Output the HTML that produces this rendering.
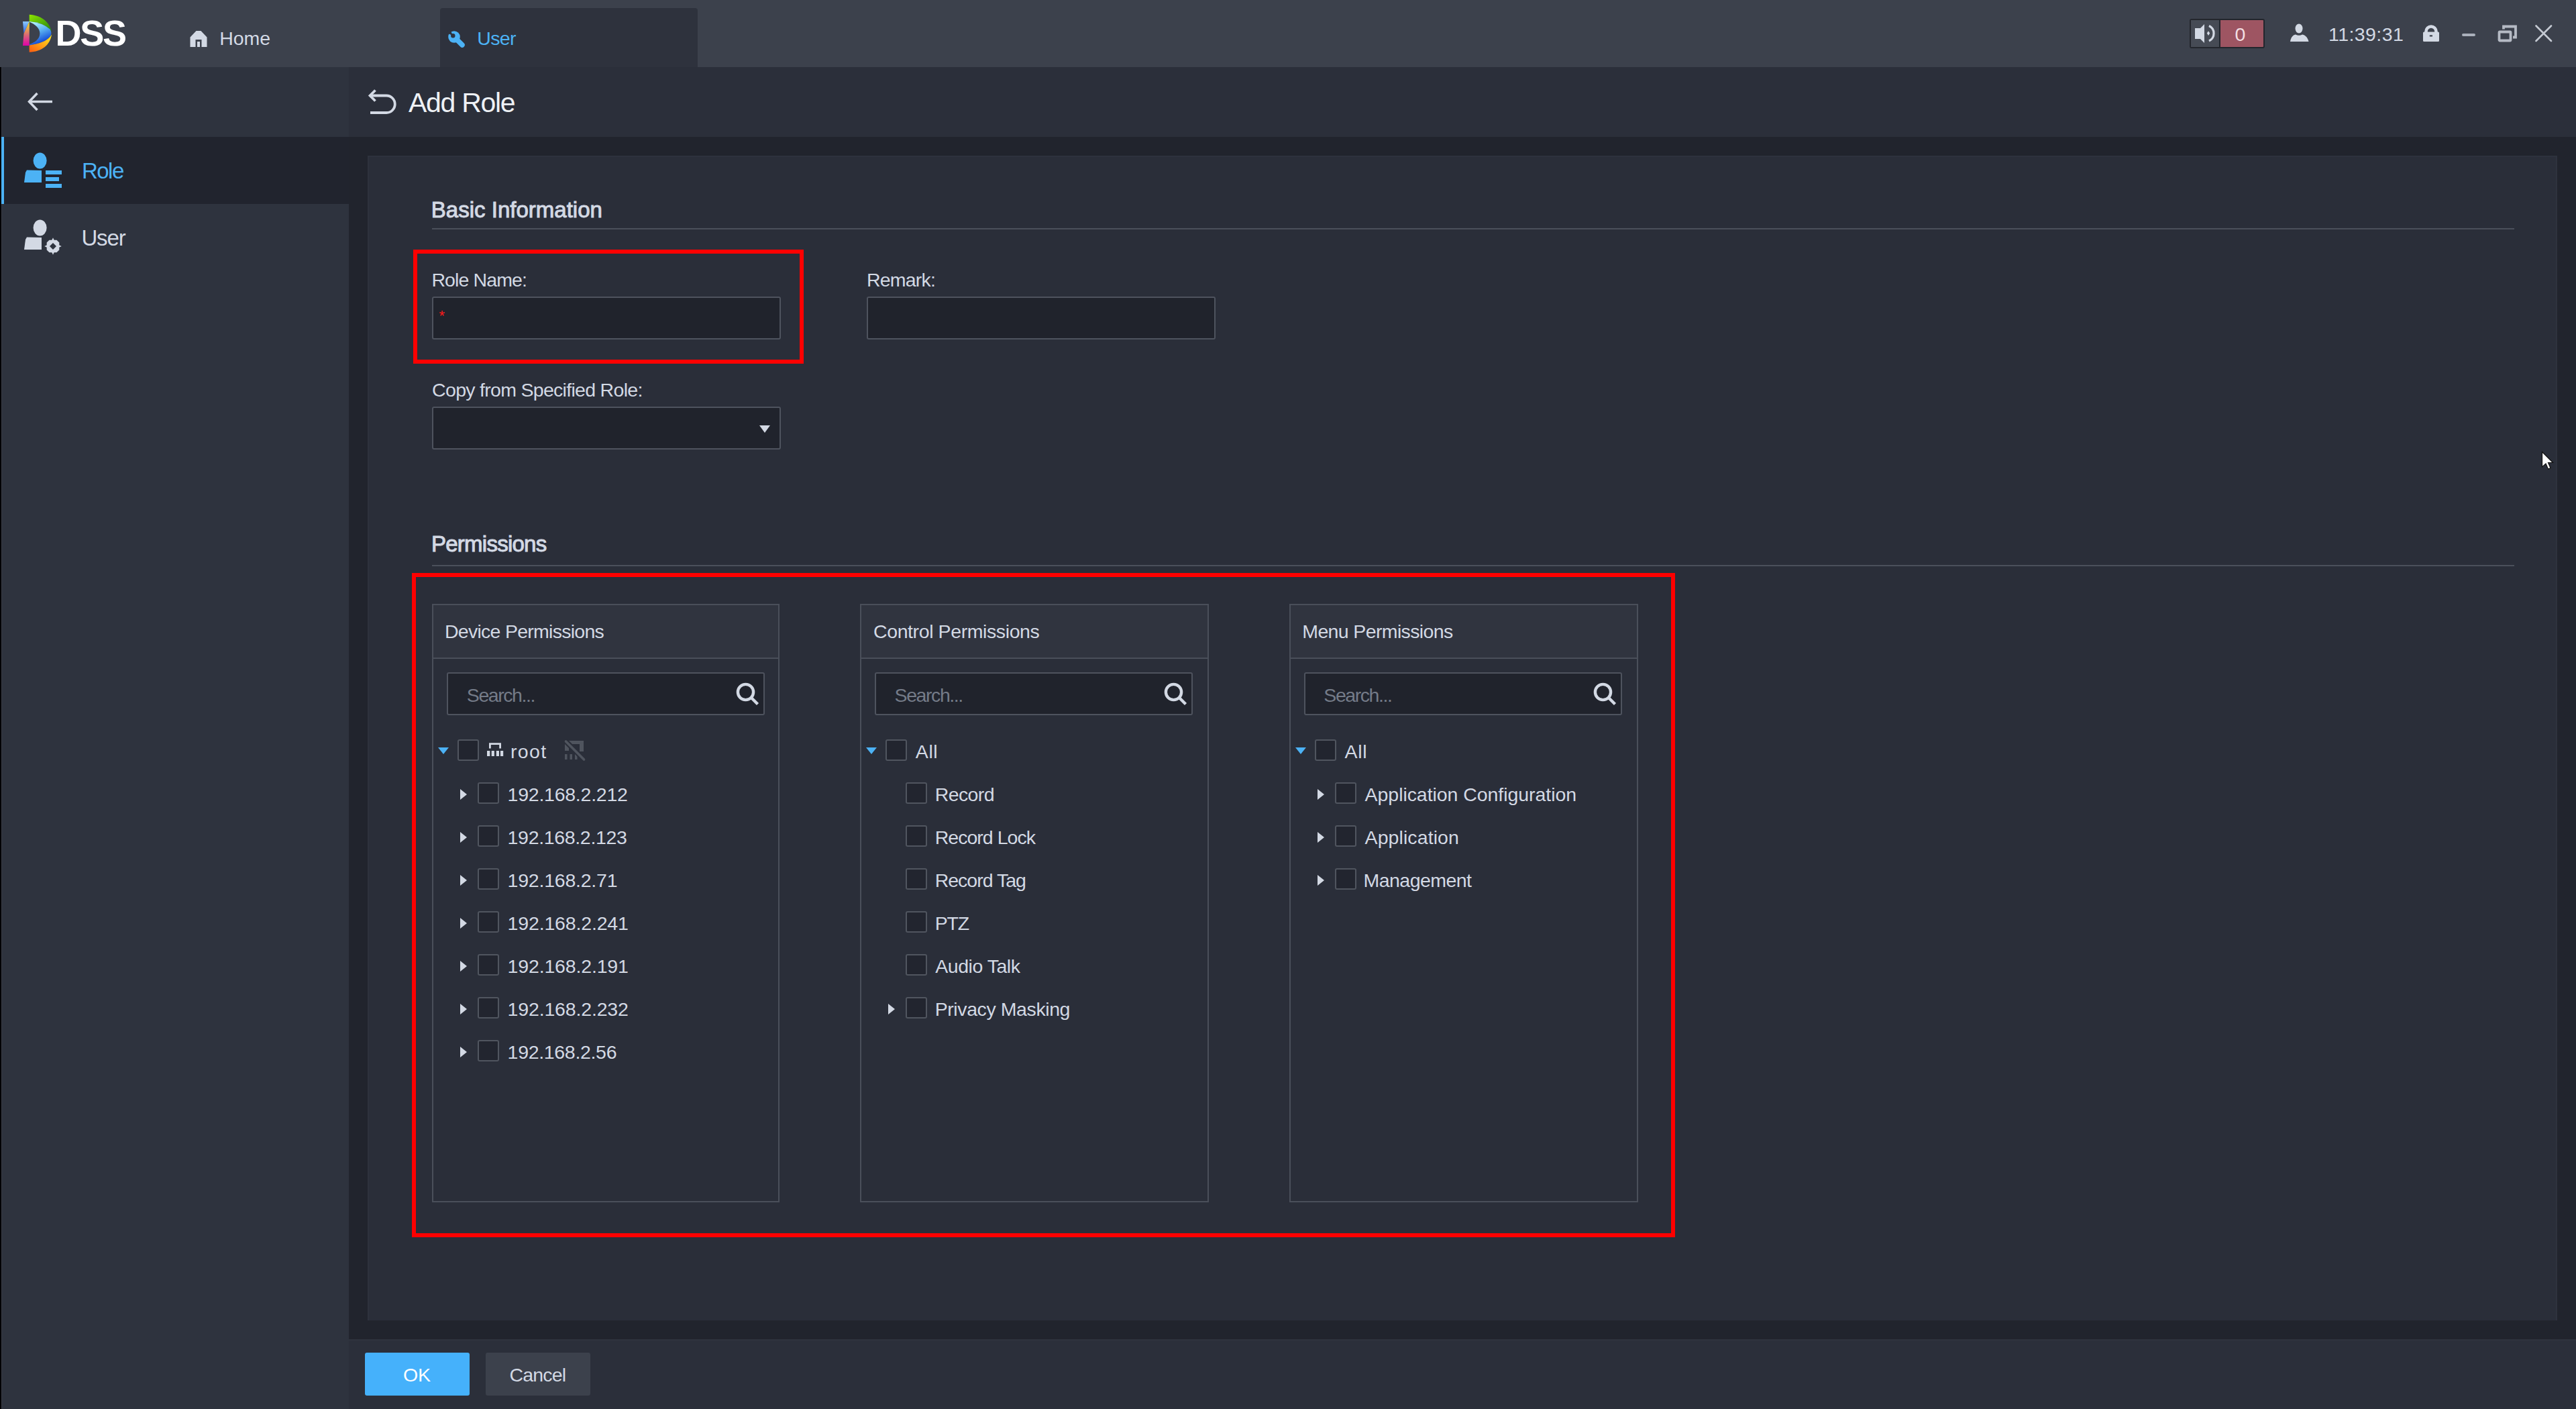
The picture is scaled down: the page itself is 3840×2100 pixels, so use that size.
<!DOCTYPE html>
<html><head><meta charset="utf-8"><style>
html,body{margin:0;padding:0;width:3840px;height:2100px;overflow:hidden;background:#21242d;}
body{position:relative;font-family:"Liberation Sans", sans-serif;}
.t{position:absolute;white-space:pre;line-height:1;font-family:"Liberation Sans", sans-serif;}
svg{display:block}
</style></head><body>
<div style="position:absolute;left:0px;top:0px;width:3840px;height:100px;background:#3c414c"></div>
<div style="position:absolute;left:656px;top:12px;width:384px;height:88px;background:#2e323d;border-radius:4px 4px 0 0"></div>
<div style="position:absolute;left:0px;top:100px;width:2px;height:2000px;background:#020205"></div>
<div style="position:absolute;left:2px;top:100px;width:518px;height:2000px;background:#2e333e"></div>
<div style="position:absolute;left:2px;top:100px;width:1px;height:2000px;background:#393c45"></div>
<div style="position:absolute;left:2px;top:204px;width:518px;height:100px;background:#21242e"></div>
<div style="position:absolute;left:2px;top:204px;width:4px;height:100px;background:#4cb2f5"></div>
<div style="position:absolute;left:520px;top:100px;width:3320px;height:2000px;background:#21242d"></div>
<div style="position:absolute;left:520px;top:100px;width:3320px;height:104px;background:#2b2f3a"></div>
<div style="position:absolute;left:548px;top:232px;width:3264px;height:1736px;background:#2a2e39;box-sizing:border-box;border:2px solid #2e323d;border-bottom:none"></div>
<div style="position:absolute;left:520px;top:1996px;width:3320px;height:104px;background:#2b2f3a"></div>
<div style="position:absolute;left:520px;top:1996px;width:3320px;height:2px;background:#2f333e"></div>
<div style="position:absolute;left:644px;top:340px;width:3104px;height:2px;background:#4b505b"></div>
<div style="position:absolute;left:644px;top:842px;width:3104px;height:2px;background:#4b505b"></div>
<div style="position:absolute;left:644px;top:442px;width:520px;height:64px;background:#20232c;box-sizing:border-box;border:2px solid #4e535e;border-radius:3px"></div>
<div style="position:absolute;left:1292px;top:442px;width:520px;height:64px;background:#20232c;box-sizing:border-box;border:2px solid #4e535e;border-radius:3px"></div>
<div style="position:absolute;left:644px;top:606px;width:520px;height:64px;background:#20232c;box-sizing:border-box;border:2px solid #4e535e;border-radius:3px"></div>
<svg style="position:absolute;left:1130px;top:633px" width="20" height="14"><path d="M2 1 L18 1 L10 12 Z" fill="#d3d9e4"/></svg>
<div class="t" style="left:654.50px;top:460.38px;font-size:22px;letter-spacing:0.000px;color:#ff1a1a;font-weight:400;">*</div>
<div style="position:absolute;left:616px;top:372px;width:582px;height:170px;box-sizing:border-box;border:6px solid #ff0000"></div>
<div style="position:absolute;left:614px;top:854px;width:1883px;height:990px;box-sizing:border-box;border:6px solid #ff0000"></div>
<div style="position:absolute;left:644px;top:900px;width:518px;height:892px;box-sizing:border-box;border:2px solid #4a4f5a;background:#2a2e39"></div>
<div style="position:absolute;left:646px;top:902px;width:514px;height:78px;background:#30343f"></div>
<div style="position:absolute;left:646px;top:980px;width:514px;height:2px;background:#4a4f5a"></div>
<div style="position:absolute;left:666px;top:1002px;width:474px;height:64px;background:#20232c;box-sizing:border-box;border:2px solid #4e535e;border-radius:3px"></div>
<svg style="position:absolute;left:1097px;top:1017px" width="36" height="36" viewBox="0 0 36 36"><circle cx="14.5" cy="14.5" r="11.6" fill="none" stroke="#d3d9e4" stroke-width="4.4"/><line x1="23" y1="23" x2="32.5" y2="32.5" stroke="#d3d9e4" stroke-width="4.4" stroke-linecap="butt"/></svg>
<div style="position:absolute;left:1282px;top:900px;width:520px;height:892px;box-sizing:border-box;border:2px solid #4a4f5a;background:#2a2e39"></div>
<div style="position:absolute;left:1284px;top:902px;width:516px;height:78px;background:#30343f"></div>
<div style="position:absolute;left:1284px;top:980px;width:516px;height:2px;background:#4a4f5a"></div>
<div style="position:absolute;left:1304px;top:1002px;width:474px;height:64px;background:#20232c;box-sizing:border-box;border:2px solid #4e535e;border-radius:3px"></div>
<svg style="position:absolute;left:1735px;top:1017px" width="36" height="36" viewBox="0 0 36 36"><circle cx="14.5" cy="14.5" r="11.6" fill="none" stroke="#d3d9e4" stroke-width="4.4"/><line x1="23" y1="23" x2="32.5" y2="32.5" stroke="#d3d9e4" stroke-width="4.4" stroke-linecap="butt"/></svg>
<div style="position:absolute;left:1922px;top:900px;width:520px;height:892px;box-sizing:border-box;border:2px solid #4a4f5a;background:#2a2e39"></div>
<div style="position:absolute;left:1924px;top:902px;width:516px;height:78px;background:#30343f"></div>
<div style="position:absolute;left:1924px;top:980px;width:516px;height:2px;background:#4a4f5a"></div>
<div style="position:absolute;left:1944px;top:1002px;width:474px;height:64px;background:#20232c;box-sizing:border-box;border:2px solid #4e535e;border-radius:3px"></div>
<svg style="position:absolute;left:2375px;top:1017px" width="36" height="36" viewBox="0 0 36 36"><circle cx="14.5" cy="14.5" r="11.6" fill="none" stroke="#d3d9e4" stroke-width="4.4"/><line x1="23" y1="23" x2="32.5" y2="32.5" stroke="#d3d9e4" stroke-width="4.4" stroke-linecap="butt"/></svg>
<svg style="position:absolute;left:653px;top:1114px" width="16" height="10"><path d="M0 0 L16 0 L8 10 Z" fill="#4cb2f5"/></svg>
<div style="position:absolute;left:682px;top:1102px;width:32px;height:32px;box-sizing:border-box;border:2px solid #50555f;background:#22252f;border-radius:3px"></div>
<svg style="position:absolute;left:720px;top:1098px" width="40" height="40" viewBox="720 1098 40 40"><path d="M730.4 1115.5 V1108.7 H745.6 V1115.5" fill="none" stroke="#d3d9e4" stroke-width="2.8"/><g fill="#d3d9e4"><rect x="726" y="1119" width="4.3" height="8"/><rect x="732.7" y="1119" width="4.2" height="8"/><rect x="739.8" y="1119" width="4.2" height="8"/><rect x="746" y="1119" width="4.2" height="8"/></g></svg>
<svg style="position:absolute;left:838px;top:1100px" width="40" height="38" viewBox="838 1100 40 38"><g fill="#4f545e"><rect x="842" y="1104" width="28" height="5"/><rect x="842" y="1104" width="6" height="15"/><rect x="864" y="1104" width="6" height="16"/><rect x="842" y="1124" width="3.5" height="8"/><rect x="849.5" y="1124" width="3.5" height="8"/><rect x="857" y="1124" width="3.5" height="8"/></g><line x1="843.5" y1="1105" x2="870.5" y2="1132" stroke="#2a2e39" stroke-width="8"/><line x1="843.5" y1="1105" x2="870.5" y2="1132" stroke="#4f545e" stroke-width="3.7" stroke-linecap="round"/></svg>
<div class="t" style="left:761.00px;top:1105.57px;font-size:28.5px;letter-spacing:1.333px;color:#d3d9e4;font-weight:400;">root</div>
<svg style="position:absolute;left:686px;top:1176px" width="10" height="16"><path d="M0 0 L10 8 L0 16 Z" fill="#d3d9e4"/></svg>
<div style="position:absolute;left:712px;top:1166px;width:32px;height:32px;box-sizing:border-box;border:2px solid #50555f;background:#22252f;border-radius:3px"></div>
<div class="t" style="left:756.60px;top:1169.57px;font-size:28.5px;letter-spacing:-0.250px;color:#d3d9e4;font-weight:400;">192.168.2.212</div>
<svg style="position:absolute;left:686px;top:1240px" width="10" height="16"><path d="M0 0 L10 8 L0 16 Z" fill="#d3d9e4"/></svg>
<div style="position:absolute;left:712px;top:1230px;width:32px;height:32px;box-sizing:border-box;border:2px solid #50555f;background:#22252f;border-radius:3px"></div>
<div class="t" style="left:756.60px;top:1233.57px;font-size:28.5px;letter-spacing:-0.333px;color:#d3d9e4;font-weight:400;">192.168.2.123</div>
<svg style="position:absolute;left:686px;top:1304px" width="10" height="16"><path d="M0 0 L10 8 L0 16 Z" fill="#d3d9e4"/></svg>
<div style="position:absolute;left:712px;top:1294px;width:32px;height:32px;box-sizing:border-box;border:2px solid #50555f;background:#22252f;border-radius:3px"></div>
<div class="t" style="left:756.60px;top:1297.57px;font-size:28.5px;letter-spacing:-0.227px;color:#d3d9e4;font-weight:400;">192.168.2.71</div>
<svg style="position:absolute;left:686px;top:1368px" width="10" height="16"><path d="M0 0 L10 8 L0 16 Z" fill="#d3d9e4"/></svg>
<div style="position:absolute;left:712px;top:1358px;width:32px;height:32px;box-sizing:border-box;border:2px solid #50555f;background:#22252f;border-radius:3px"></div>
<div class="t" style="left:756.60px;top:1361.57px;font-size:28.5px;letter-spacing:-0.167px;color:#d3d9e4;font-weight:400;">192.168.2.241</div>
<svg style="position:absolute;left:686px;top:1432px" width="10" height="16"><path d="M0 0 L10 8 L0 16 Z" fill="#d3d9e4"/></svg>
<div style="position:absolute;left:712px;top:1422px;width:32px;height:32px;box-sizing:border-box;border:2px solid #50555f;background:#22252f;border-radius:3px"></div>
<div class="t" style="left:756.60px;top:1425.57px;font-size:28.5px;letter-spacing:-0.167px;color:#d3d9e4;font-weight:400;">192.168.2.191</div>
<svg style="position:absolute;left:686px;top:1496px" width="10" height="16"><path d="M0 0 L10 8 L0 16 Z" fill="#d3d9e4"/></svg>
<div style="position:absolute;left:712px;top:1486px;width:32px;height:32px;box-sizing:border-box;border:2px solid #50555f;background:#22252f;border-radius:3px"></div>
<div class="t" style="left:756.60px;top:1489.57px;font-size:28.5px;letter-spacing:-0.167px;color:#d3d9e4;font-weight:400;">192.168.2.232</div>
<svg style="position:absolute;left:686px;top:1560px" width="10" height="16"><path d="M0 0 L10 8 L0 16 Z" fill="#d3d9e4"/></svg>
<div style="position:absolute;left:712px;top:1550px;width:32px;height:32px;box-sizing:border-box;border:2px solid #50555f;background:#22252f;border-radius:3px"></div>
<div class="t" style="left:756.60px;top:1553.57px;font-size:28.5px;letter-spacing:-0.318px;color:#d3d9e4;font-weight:400;">192.168.2.56</div>
<svg style="position:absolute;left:1291px;top:1114px" width="16" height="10"><path d="M0 0 L16 0 L8 10 Z" fill="#4cb2f5"/></svg>
<div style="position:absolute;left:1320px;top:1102px;width:32px;height:32px;box-sizing:border-box;border:2px solid #50555f;background:#22252f;border-radius:3px"></div>
<div class="t" style="left:1364.80px;top:1105.87px;font-size:28.5px;letter-spacing:0.600px;color:#d3d9e4;font-weight:400;">All</div>
<div style="position:absolute;left:1350px;top:1166px;width:32px;height:32px;box-sizing:border-box;border:2px solid #50555f;background:#22252f;border-radius:3px"></div>
<div class="t" style="left:1393.70px;top:1169.87px;font-size:28.5px;letter-spacing:-0.600px;color:#d3d9e4;font-weight:400;">Record</div>
<div style="position:absolute;left:1350px;top:1230px;width:32px;height:32px;box-sizing:border-box;border:2px solid #50555f;background:#22252f;border-radius:3px"></div>
<div class="t" style="left:1393.70px;top:1233.87px;font-size:28.5px;letter-spacing:-0.970px;color:#d3d9e4;font-weight:400;">Record Lock</div>
<div style="position:absolute;left:1350px;top:1294px;width:32px;height:32px;box-sizing:border-box;border:2px solid #50555f;background:#22252f;border-radius:3px"></div>
<div class="t" style="left:1393.70px;top:1297.87px;font-size:28.5px;letter-spacing:-1.000px;color:#d3d9e4;font-weight:400;">Record Tag</div>
<div style="position:absolute;left:1350px;top:1358px;width:32px;height:32px;box-sizing:border-box;border:2px solid #50555f;background:#22252f;border-radius:3px"></div>
<div class="t" style="left:1393.70px;top:1361.87px;font-size:28.5px;letter-spacing:-1.200px;color:#d3d9e4;font-weight:400;">PTZ</div>
<div style="position:absolute;left:1350px;top:1422px;width:32px;height:32px;box-sizing:border-box;border:2px solid #50555f;background:#22252f;border-radius:3px"></div>
<div class="t" style="left:1394.30px;top:1425.87px;font-size:28.5px;letter-spacing:-0.478px;color:#d3d9e4;font-weight:400;">Audio Talk</div>
<svg style="position:absolute;left:1324px;top:1496px" width="10" height="16"><path d="M0 0 L10 8 L0 16 Z" fill="#d3d9e4"/></svg>
<div style="position:absolute;left:1350px;top:1486px;width:32px;height:32px;box-sizing:border-box;border:2px solid #50555f;background:#22252f;border-radius:3px"></div>
<div class="t" style="left:1393.70px;top:1489.87px;font-size:28.5px;letter-spacing:-0.407px;color:#d3d9e4;font-weight:400;">Privacy Masking</div>
<svg style="position:absolute;left:1931px;top:1114px" width="16" height="10"><path d="M0 0 L16 0 L8 10 Z" fill="#4cb2f5"/></svg>
<div style="position:absolute;left:1960px;top:1102px;width:32px;height:32px;box-sizing:border-box;border:2px solid #50555f;background:#22252f;border-radius:3px"></div>
<div class="t" style="left:2004.60px;top:1105.87px;font-size:28.5px;letter-spacing:0.600px;color:#d3d9e4;font-weight:400;">All</div>
<svg style="position:absolute;left:1964px;top:1176px" width="10" height="16"><path d="M0 0 L10 8 L0 16 Z" fill="#d3d9e4"/></svg>
<div style="position:absolute;left:1990px;top:1166px;width:32px;height:32px;box-sizing:border-box;border:2px solid #50555f;background:#22252f;border-radius:3px"></div>
<div class="t" style="left:2034.60px;top:1169.87px;font-size:28.5px;letter-spacing:-0.058px;color:#d3d9e4;font-weight:400;">Application Configuration</div>
<svg style="position:absolute;left:1964px;top:1240px" width="10" height="16"><path d="M0 0 L10 8 L0 16 Z" fill="#d3d9e4"/></svg>
<div style="position:absolute;left:1990px;top:1230px;width:32px;height:32px;box-sizing:border-box;border:2px solid #50555f;background:#22252f;border-radius:3px"></div>
<div class="t" style="left:2034.60px;top:1233.87px;font-size:28.5px;letter-spacing:0.080px;color:#d3d9e4;font-weight:400;">Application</div>
<svg style="position:absolute;left:1964px;top:1304px" width="10" height="16"><path d="M0 0 L10 8 L0 16 Z" fill="#d3d9e4"/></svg>
<div style="position:absolute;left:1990px;top:1294px;width:32px;height:32px;box-sizing:border-box;border:2px solid #50555f;background:#22252f;border-radius:3px"></div>
<div class="t" style="left:2032.60px;top:1297.87px;font-size:28.5px;letter-spacing:-0.556px;color:#d3d9e4;font-weight:400;">Management</div>
<div class="t" style="left:663.00px;top:926.87px;font-size:28.5px;letter-spacing:-0.735px;color:#d3d9e4;font-weight:400;">Device Permissions</div>
<div class="t" style="left:1302.00px;top:926.87px;font-size:28.5px;letter-spacing:-0.400px;color:#d3d9e4;font-weight:400;">Control Permissions</div>
<div class="t" style="left:1941.30px;top:926.87px;font-size:28.5px;letter-spacing:-0.633px;color:#d3d9e4;font-weight:400;">Menu Permissions</div>
<div class="t" style="left:695.80px;top:1021.87px;font-size:28.5px;letter-spacing:-1.425px;color:#747b88;font-weight:400;">Search...</div>
<div class="t" style="left:1333.60px;top:1021.87px;font-size:28.5px;letter-spacing:-1.425px;color:#747b88;font-weight:400;">Search...</div>
<div class="t" style="left:1973.30px;top:1021.87px;font-size:28.5px;letter-spacing:-1.425px;color:#747b88;font-weight:400;">Search...</div>
<div class="t" style="left:642.80px;top:296.07px;font-size:33px;letter-spacing:0.012px;color:#d3d9e4;font-weight:400;-webkit-text-stroke:1px currentColor">Basic Information</div>
<div class="t" style="left:643.00px;top:794.37px;font-size:33px;letter-spacing:-0.750px;color:#d3d9e4;font-weight:400;-webkit-text-stroke:1px currentColor">Permissions</div>
<div class="t" style="left:643.40px;top:403.47px;font-size:28.5px;letter-spacing:-0.889px;color:#d3d9e4;font-weight:400;">Role Name:</div>
<div class="t" style="left:1291.90px;top:402.67px;font-size:28.5px;letter-spacing:-0.767px;color:#d3d9e4;font-weight:400;">Remark:</div>
<div class="t" style="left:644.10px;top:566.57px;font-size:28.5px;letter-spacing:-0.700px;color:#d3d9e4;font-weight:400;">Copy from Specified Role:</div>
<div class="t" style="left:609.00px;top:133.29px;font-size:41px;letter-spacing:-1.286px;color:#eef1f5;font-weight:400;">Add Role</div>
<svg style="position:absolute;left:546px;top:130px" width="48" height="44" viewBox="546 130 48 44"><path d="M553 142.5 H576 A12.75 12.75 0 0 1 576 168 H552" fill="none" stroke="#d3d9e4" stroke-width="3.8"/><path d="M559.5 134.5 L551.5 142.5 L559.5 150.5" fill="none" stroke="#d3d9e4" stroke-width="3.8" stroke-linecap="butt"/></svg>
<div class="t" style="left:82.50px;top:22.29px;font-size:54px;letter-spacing:-2.250px;color:#ffffff;font-weight:700;">DSS</div>
<svg style="position:absolute;left:28px;top:16px" width="60" height="68" viewBox="28 16 60 68">
<defs>
<linearGradient id="g1" x1="0" y1="0" x2="1" y2="1"><stop offset="0" stop-color="#8ee600"/><stop offset="1" stop-color="#1f8010"/></linearGradient>
<linearGradient id="g2" x1="0.2" y1="0" x2="0.6" y2="1"><stop offset="0" stop-color="#b8f8ff"/><stop offset="0.45" stop-color="#5ab0f0"/><stop offset="1" stop-color="#0030d0"/></linearGradient>
<linearGradient id="g3" x1="0" y1="1" x2="1" y2="0"><stop offset="0" stop-color="#ff5a10"/><stop offset="1" stop-color="#ffee20"/></linearGradient>
<linearGradient id="g4" x1="0" y1="0" x2="0" y2="1"><stop offset="0" stop-color="#f4f020"/><stop offset="0.6" stop-color="#d8607a"/><stop offset="1" stop-color="#e000a8"/></linearGradient>
<linearGradient id="g5" x1="0" y1="0" x2="0" y2="1"><stop offset="0" stop-color="#8ac8ff"/><stop offset="1" stop-color="#2a60e0"/></linearGradient>
</defs>
<path d="M43.7 21.8 C61 22.5 74 33 77 47 L74.5 43.5 Q63 33.5 43.7 32 Z" fill="url(#g1)"/>
<path d="M43.7 32 Q63 33.5 74.5 43.5 Q78.5 49.5 74.5 55 Q66 64.5 43.7 67.4 Z" fill="url(#g2)"/>
<path d="M43.7 32.5 C52 36 59.4 42 59.4 49.8 C59.4 58 52 63.5 43.7 66 Z" fill="#3c414c"/>
<path d="M43.7 67.4 Q66 64.5 74.5 55 L77 51.5 C75 67 62 77 43.7 77.8 Z" fill="url(#g3)"/>
<path d="M34 32 L43.7 32 L35.5 50 Z" fill="url(#g5)"/>
<path d="M43.7 32 L43.7 68 L34 68 L35.5 50 Z" fill="url(#g4)"/>
</svg>
<svg style="position:absolute;left:283px;top:45px" width="26" height="26" viewBox="0 0 26 26"><path d="M0.5 10.5 L9.5 1 H16.5 L25.5 10.5 V25 H17.5 V14 H8.5 V25 H0.5 Z" fill="#d3d9e4"/><rect x="11" y="17" width="4" height="8" fill="#d3d9e4"/></svg>
<div class="t" style="left:327.20px;top:42.77px;font-size:28.5px;letter-spacing:-0.067px;color:#d3d9e4;font-weight:400;">Home</div>
<svg style="position:absolute;left:660px;top:40px" width="40" height="36" viewBox="660 40 40 36"><circle cx="677" cy="55" r="8.8" fill="#4cb2f5"/><line x1="679" y1="57" x2="689" y2="67" stroke="#4cb2f5" stroke-width="7.5" stroke-linecap="round"/><circle cx="675.3" cy="53.3" r="3.2" fill="#2e323d"/><path d="M675.3 53.3 L665 48.5 L670.5 43 Z" fill="#2e323d"/></svg>
<div class="t" style="left:711.30px;top:42.87px;font-size:28.5px;letter-spacing:-0.667px;color:#4cb2f5;font-weight:400;">User</div>
<div style="position:absolute;left:3264px;top:28px;width:112px;height:44px;box-sizing:border-box;border:2px solid #23262d;border-radius:3px;background:#9e5562"></div>
<div style="position:absolute;left:3266px;top:30px;width:42px;height:40px;background:#464b55"></div>
<div style="position:absolute;left:3308px;top:30px;width:2px;height:40px;background:#23262d"></div>
<svg style="position:absolute;left:3270px;top:35px" width="34" height="30" viewBox="0 0 34 30"><path d="M2 7 H10 L16 1 V29 L10 23 H2 Z" fill="#d3d9e4"/><path d="M22 11.3 L24.2 14.6 L22 18 L19.8 14.6 Z" fill="#d3d9e4"/><path d="M23 3.5 A12.5 12.5 0 0 1 23 26" fill="none" stroke="#d3d9e4" stroke-width="3.2"/></svg>
<div class="t" style="left:3331.60px;top:37.27px;font-size:28.5px;letter-spacing:0.000px;color:#f2dfe2;font-weight:400;">0</div>
<svg style="position:absolute;left:3413px;top:35px" width="30" height="28" viewBox="0 0 30 28"><ellipse cx="14" cy="7.5" rx="5.5" ry="7" fill="#d3d9e4"/><path d="M1 27 C2 20 6 16.5 9 16.5 Q14 19 19 16.5 C22 16.5 27 20 28.5 27 Z" fill="#d3d9e4"/></svg>
<div class="t" style="left:3471.00px;top:36.87px;font-size:28.5px;letter-spacing:0.429px;color:#d3d9e4;font-weight:400;">11:39:31</div>
<svg style="position:absolute;left:3611px;top:37px" width="26" height="26" viewBox="0 0 26 26"><path d="M5.5 12 V10 A7.5 7.5 0 0 1 20.5 10 V12" fill="none" stroke="#d3d9e4" stroke-width="4.6"/><rect x="1" y="10.5" width="24" height="14.5" rx="1.5" fill="#d3d9e4"/><rect x="10.8" y="15.3" width="4.2" height="2.2" fill="#3c414c"/></svg>
<div style="position:absolute;left:3670px;top:50px;width:20px;height:4px;background:#aab0bb;border-radius:2px"></div>
<svg style="position:absolute;left:3722px;top:36px" width="32" height="28" viewBox="0 0 32 28"><path d="M10 7.5 V3.5 H28 V19.5 H24" fill="none" stroke="#b5bac4" stroke-width="3.8"/><rect x="3.5" y="11.5" width="17" height="13" rx="1" fill="none" stroke="#b5bac4" stroke-width="3.8"/></svg>
<svg style="position:absolute;left:3778px;top:37px" width="28" height="26" viewBox="0 0 28 26"><path d="M2.5 1.5 L25 24 M25 1.5 L2.5 24" stroke="#c5cad3" stroke-width="2.6" stroke-linecap="round"/></svg>
<svg style="position:absolute;left:40px;top:136px" width="40" height="31" viewBox="0 0 40 31"><path d="M4 15.5 H38" stroke="#d3d9e4" stroke-width="3.5"/><path d="M15.5 3 L3.5 15.5 L15.5 28" fill="none" stroke="#d3d9e4" stroke-width="3.5"/></svg>
<svg style="position:absolute;left:36px;top:227px" width="57" height="54" viewBox="0 0 57 54"><ellipse cx="23.6" cy="12.5" rx="10" ry="12" fill="#4cb2f5"/><path d="M2 30 L4 26.5 L26 27 V45 H0 Z" fill="#4cb2f5"/><rect x="32" y="27" width="24" height="6" fill="#4cb2f5"/><rect x="32" y="37" width="20" height="6" fill="#4cb2f5"/><rect x="32" y="47" width="24" height="6" fill="#4cb2f5"/></svg>
<div class="t" style="left:122.00px;top:238.27px;font-size:33px;letter-spacing:-1.533px;color:#4cb2f5;font-weight:400;">Role</div>
<svg style="position:absolute;left:36px;top:327px" width="57" height="58" viewBox="0 0 57 58"><ellipse cx="23.6" cy="12.5" rx="10" ry="12" fill="#d3d9e4"/><path d="M2 30 L4 26.5 L26 27 V45 H0 Z" fill="#d3d9e4"/><g transform="translate(43,40)"><path d="M-9.3 -5.5 L-5.5 -9.3 H5.5 L9.3 -5.5 V5.5 L5.5 9.3 H-5.5 L-9.3 5.5 Z" fill="#d3d9e4"/><path d="M-1.8 -9 L0 -12.8 L1.8 -9 Z M-1.8 9 L0 12.8 L1.8 9 Z M-9 -1.8 L-12.8 0 L-9 1.8 Z M9 -1.8 L12.8 0 L9 1.8 Z" fill="#d3d9e4"/><path d="M0 -5 L5 0 L0 5 L-5 0 Z" fill="#2e333e"/></g></svg>
<div class="t" style="left:121.40px;top:338.07px;font-size:33px;letter-spacing:-1.133px;color:#d3d9e4;font-weight:400;">User</div>
<div style="position:absolute;left:544px;top:2016px;width:156px;height:64px;background:#45b1fb;border-radius:3px"></div>
<div style="position:absolute;left:724px;top:2016px;width:156px;height:64px;background:#3c414c;border-radius:3px"></div>
<div class="t" style="left:601.00px;top:2035.27px;font-size:28.5px;letter-spacing:-0.200px;color:#ffffff;font-weight:400;">OK</div>
<div class="t" style="left:759.60px;top:2035.27px;font-size:28.5px;letter-spacing:-0.840px;color:#d3d9e4;font-weight:400;">Cancel</div>
<svg style="position:absolute;left:3787px;top:672px" width="22" height="30" viewBox="0 0 22 30"><path d="M2.5 1.5 V24 L8 19 L11.5 27 L15 25.5 L11.5 17.5 H18.5 Z" fill="#ffffff" stroke="#111" stroke-width="1.2"/></svg>
</body></html>
